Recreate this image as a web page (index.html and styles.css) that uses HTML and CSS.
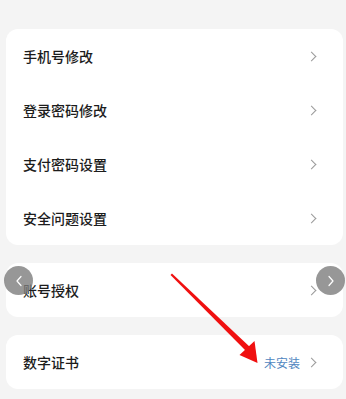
FILE: index.html
```
<!DOCTYPE html>
<html lang="zh">
<head>
<meta charset="utf-8">
<link rel="stylesheet" href="styles.css">
</head>
<body>
<div class="page">
  <div class="card">
    <div class="row"><span class="label">手机号修改</span><span class="chev"></span></div>
    <div class="row"><span class="label">登录密码修改</span><span class="chev"></span></div>
    <div class="row"><span class="label">支付密码设置</span><span class="chev"></span></div>
    <div class="row"><span class="label">安全问题设置</span><span class="chev"></span></div>
  </div>
  <div class="card">
    <div class="row"><span class="label">账号授权</span><span class="chev"></span></div>
  </div>
  <div class="card">
    <div class="row"><span class="label">数字证书</span><span class="right"><span class="status">未安装</span><span class="chev"></span></span></div>
  </div>
</div>
<div class="nav nav-left"><svg width="10" height="12" viewBox="0 0 10 12"><path d="M7 1.5 L3 6 L7 10.5" fill="none" stroke="#fff" stroke-width="1.2" stroke-linecap="round" stroke-linejoin="round"/></svg></div>
<div class="nav nav-right"><svg width="10" height="12" viewBox="0 0 10 12"><path d="M3 1.5 L7 6 L3 10.5" fill="none" stroke="#fff" stroke-width="1.2" stroke-linecap="round" stroke-linejoin="round"/></svg></div>
<svg class="arrow" width="346" height="399" viewBox="0 0 346 399">
  <polygon points="170.5,275 172,273.5 251.5,348.5 247.5,352.5" fill="#f01010"/>
  <polygon points="257.5,363 239.5,355 254.5,341" fill="#f01010"/>
</svg>
</body>
</html>
```
FILE: styles.css
```
html, body {
  margin: 0;
  padding: 0;
}
body {
  width: 346px;
  height: 399px;
  overflow: hidden;
  background: #f4f4f4;
  font-family: "Noto Sans CJK SC", "Noto Sans", sans-serif;
  position: relative;
}
.page {
  padding: 29px 3px 0 6px;
  display: flex;
  flex-direction: column;
  gap: 18px;
}
.card {
  background: #fff;
  border-radius: 12px;
}
.row {
  height: 54px;
  display: flex;
  align-items: center;
  justify-content: space-between;
  padding: 0 27px 0 17px;
}
.label {
  font-size: 14px;
  color: #1c1c1c;
  font-weight: 500;
}
.right {
  display: flex;
  align-items: center;
  gap: 8px;
}
.status {
  font-size: 12px;
  color: #4f86c0;
}
.chev {
  width: 6px;
  height: 6px;
  border-top: 1.5px solid #9a9a9a;
  border-right: 1.5px solid #9a9a9a;
  transform: rotate(45deg);
  margin-right: 1px;
}
.nav {
  position: absolute;
  width: 29px;
  height: 29px;
  border-radius: 50%;
  background: rgba(125,125,125,0.8);
  display: flex;
  align-items: center;
  justify-content: center;
  top: 266px;
}
.nav-left { left: 4px; }
.nav-right { left: 316px; }
.arrow {
  position: absolute;
  left: 0;
  top: 0;
}
```
